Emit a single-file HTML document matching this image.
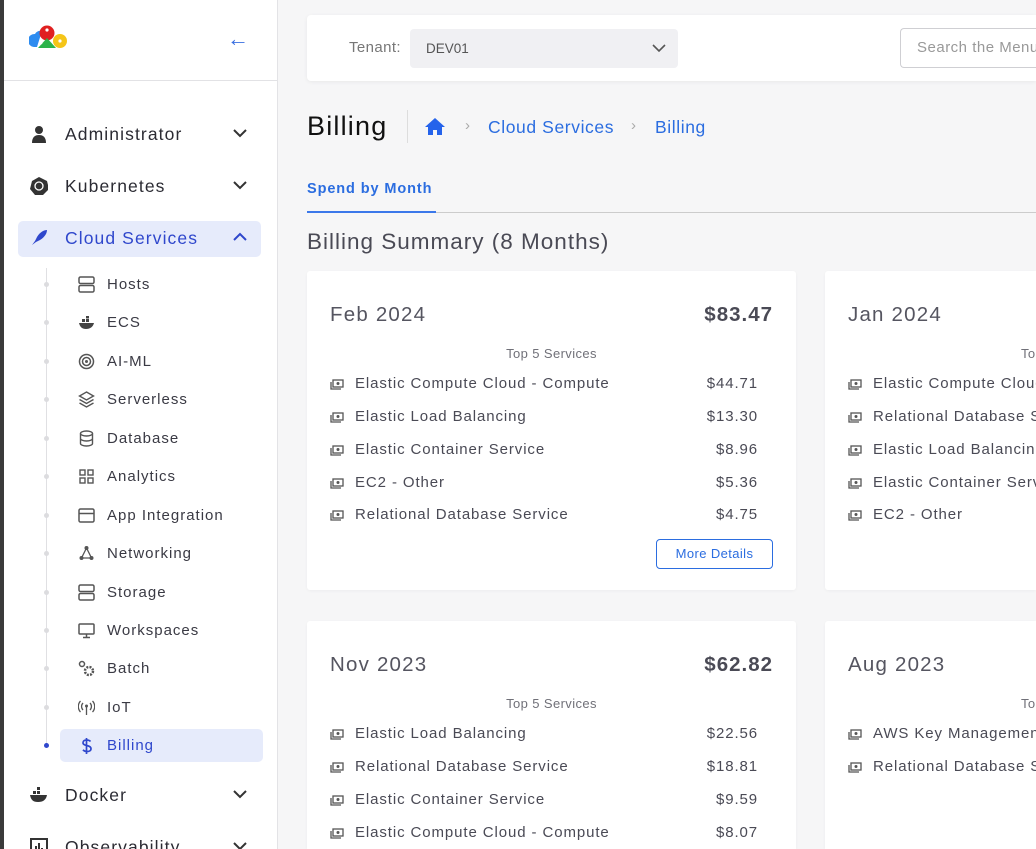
<!DOCTYPE html>
<html><head><meta charset="utf-8"><style>
*{box-sizing:border-box;margin:0;padding:0}
html{width:1036px;height:849px;overflow:hidden}
body{width:1036px;height:849px;overflow:hidden;background:#f6f6f7;font-family:"Liberation Sans",sans-serif;position:relative;color:#3d3d4a}
.abs{position:absolute}
#edge{left:0;top:0;width:4px;height:849px;background:#3a3a3a}
#side{left:4px;top:0;width:274px;height:849px;background:#fff;border-right:1px solid #e3e3e6}
#sidehead{left:4px;top:0;width:273px;height:81px;border-bottom:1px solid #e2e2e5}
.top{position:absolute;left:0;width:273px;height:36px;font-size:17.5px;color:#2b2b33;letter-spacing:1.1px}
.top .ic{position:absolute;left:26px;top:9px;width:18px;height:18px}
.top .t{position:absolute;left:61px;top:8px}
.top .ch{position:absolute;left:229px;top:12px}
.sub{position:absolute;left:56px;width:203px;height:32px;font-size:15px;color:#3a3a44;letter-spacing:1px}
.sub .t{position:absolute;left:51px;top:8px}
.sub svg{position:absolute;left:22px;top:8px}
.dot{position:absolute;left:44px;width:5px;height:5px;border-radius:50%;background:#dcdcdf}
.card{position:absolute;background:#fff;border-radius:3px;box-shadow:0 1px 3px rgba(0,0,0,.04);overflow:hidden}
.mon{position:absolute;left:23px;top:32px;font-size:20.5px;color:#555560;letter-spacing:1.2px}
.tot{position:absolute;right:23px;top:32px;font-size:20.5px;font-weight:bold;color:#4a4a55;letter-spacing:1px}
.t5{position:absolute;left:0;width:100%;text-align:center;top:75px;font-size:13px;color:#707078;letter-spacing:.4px}
.row{position:absolute;left:23px;width:428px;font-size:15px;color:#4a4a55;letter-spacing:.9px;white-space:nowrap}
.row .n{position:absolute;left:25px;top:1px}
.row .a{position:absolute;right:0;top:1px}
.row svg{position:absolute;left:0;top:5px}
</style></head><body>
<div class="abs" id="edge"></div>
<div class="abs" id="side"></div>
<div class="abs" id="sidehead"></div>
<svg class="abs" style="left:29px;top:25px" width="39" height="25" viewBox="0 0 39 25">
<path d="M6 9a6 6 0 0 1 7-3L8 22H5a6.5 6.5 0 0 1 1-13z" fill="#2d8cf0"/>
<circle cx="18" cy="8" r="7.5" fill="#e02020"/>
<path d="M9 23l9-10 9 10z" fill="#2bb34a"/>
<circle cx="31" cy="16" r="7" fill="#f5c518"/>
<circle cx="18" cy="5" r="1.6" fill="#fff"/><circle cx="31" cy="16" r="1.6" fill="#fff"/><circle cx="12" cy="18" r="1.4" fill="#fff"/>
</svg>
<div class="abs" style="left:227px;top:26px;font-size:22px;color:#3a6fe0">←</div>

<div class="top" style="left:4px;top:116px"><svg class="ic" viewBox="0 0 18 18"><circle cx="9" cy="5" r="4" fill="#333"/><path d="M2 18c0-6 3-8 7-8s7 2 7 8z" fill="#333"/></svg><span class="t">Administrator</span><svg class="ch" width="14" height="10"><path d="M1 2l6 6 6-6" stroke="#333" stroke-width="2" fill="none"/></svg></div>
<div class="top" style="left:4px;top:168px"><svg class="ic" viewBox="0 0 18 18"><path d="M9 0l8 4 2 8-6 6H5l-5-6 2-8z" fill="#333"/><circle cx="9" cy="9" r="4" stroke="#fff" stroke-width="1.3" fill="none"/></svg><span class="t">Kubernetes</span><svg class="ch" width="14" height="10"><path d="M1 2l6 6 6-6" stroke="#333" stroke-width="2" fill="none"/></svg></div>
<div class="abs" style="left:18px;top:221px;width:243px;height:36px;background:#e6ebfb;border-radius:5px"></div>
<div class="top" style="left:4px;top:220px;color:#2f47cc"><svg class="ic" viewBox="0 0 18 18"><path d="M4 14l3-6c3-5 7-7 10-7 0 3-2 7-7 10z M2 16l3-4 1 1z" fill="#2f47cc"/></svg><span class="t">Cloud Services</span><svg class="ch" width="14" height="10"><path d="M1 8l6-6 6 6" stroke="#2f47cc" stroke-width="2" fill="none"/></svg></div>

<div class="abs" style="left:46px;top:268px;width:1px;height:478px;background:#e0e0e3"></div>
<div class="dot" style="top:282px"></div><div class="dot" style="top:320px"></div><div class="dot" style="top:359px"></div><div class="dot" style="top:397px"></div><div class="dot" style="top:436px"></div><div class="dot" style="top:474px"></div><div class="dot" style="top:513px"></div><div class="dot" style="top:551px"></div><div class="dot" style="top:590px"></div><div class="dot" style="top:628px"></div><div class="dot" style="top:666px"></div><div class="dot" style="top:705px"></div>
<div class="dot" style="top:743px;background:#2f47cc"></div>

<div class="sub" style="top:268px"><svg width="17" height="17"><rect x="1" y="1" width="15" height="6.5" rx="1.5" stroke="#555" stroke-width="1.5" fill="none"/><rect x="1" y="9.5" width="15" height="6.5" rx="1.5" stroke="#555" stroke-width="1.5" fill="none"/></svg><span class="t">Hosts</span></div>
<div class="sub" style="top:306px"><svg width="17" height="17"><path d="M1 9h15c-1 4-4 6-8 6S2 13 1 9z" fill="#444"/><rect x="4" y="5" width="3" height="3" fill="#444"/><rect x="8" y="5" width="3" height="3" fill="#444"/><rect x="8" y="2" width="3" height="2.5" fill="#444"/></svg><span class="t">ECS</span></div>
<div class="sub" style="top:345px"><svg width="17" height="17"><circle cx="8.5" cy="8.5" r="7" stroke="#555" stroke-width="1.5" fill="none"/><circle cx="8.5" cy="8.5" r="4" stroke="#555" stroke-width="1.5" fill="none"/><circle cx="8.5" cy="8.5" r="1.5" fill="#555"/></svg><span class="t">AI-ML</span></div>
<div class="sub" style="top:383px"><svg width="17" height="17"><path d="M8.5 1l7 4-7 4-7-4z M1.5 8.5l7 4 7-4 M1.5 12l7 4 7-4" stroke="#555" stroke-width="1.4" fill="none"/></svg><span class="t">Serverless</span></div>
<div class="sub" style="top:422px"><svg width="17" height="17"><ellipse cx="8.5" cy="3.5" rx="6" ry="2.5" stroke="#555" stroke-width="1.4" fill="none"/><path d="M2.5 3.5v10c0 1.4 2.7 2.5 6 2.5s6-1.1 6-2.5v-10 M2.5 8.5c0 1.4 2.7 2.5 6 2.5s6-1.1 6-2.5" stroke="#555" stroke-width="1.4" fill="none"/></svg><span class="t">Database</span></div>
<div class="sub" style="top:460px"><svg width="17" height="17"><rect x="2" y="2" width="5" height="5" stroke="#555" stroke-width="1.4" fill="none"/><rect x="10" y="2" width="5" height="5" stroke="#555" stroke-width="1.4" fill="none"/><rect x="2" y="10" width="5" height="5" stroke="#555" stroke-width="1.4" fill="none"/><rect x="10" y="10" width="5" height="5" stroke="#555" stroke-width="1.4" fill="none"/></svg><span class="t">Analytics</span></div>
<div class="sub" style="top:499px"><svg width="17" height="17"><rect x="1" y="2" width="15" height="13" rx="1.5" stroke="#555" stroke-width="1.5" fill="none"/><path d="M1 6.5h15" stroke="#555" stroke-width="1.5"/></svg><span class="t">App Integration</span></div>
<div class="sub" style="top:537px"><svg width="17" height="17"><path d="M8.5 3l-5 10h10z" stroke="#555" stroke-width="1.3" fill="none"/><circle cx="8.5" cy="3" r="2" fill="#555"/><circle cx="3.5" cy="13" r="2" fill="#555"/><circle cx="13.5" cy="13" r="2" fill="#555"/></svg><span class="t">Networking</span></div>
<div class="sub" style="top:576px"><svg width="17" height="17"><rect x="1" y="1" width="15" height="6.5" rx="1.5" stroke="#555" stroke-width="1.5" fill="none"/><rect x="1" y="9.5" width="15" height="6.5" rx="1.5" stroke="#555" stroke-width="1.5" fill="none"/></svg><span class="t">Storage</span></div>
<div class="sub" style="top:614px"><svg width="17" height="17"><rect x="1" y="2" width="15" height="10" rx="1" stroke="#555" stroke-width="1.5" fill="none"/><path d="M5 15.5h7 M8.5 12v3" stroke="#555" stroke-width="1.5"/></svg><span class="t">Workspaces</span></div>
<div class="sub" style="top:652px"><svg width="17" height="17"><circle cx="4" cy="4" r="2.5" stroke="#555" stroke-width="1.5" fill="none"/><circle cx="11" cy="11" r="4" stroke="#555" stroke-width="2.5" fill="none" stroke-dasharray="2 1.2"/></svg><span class="t">Batch</span></div>
<div class="sub" style="top:691px"><svg width="17" height="17"><path d="M8.5 7v9 M5 4a5 5 0 0 0 0 7 M12 4a5 5 0 0 1 0 7 M2.5 2a8 8 0 0 0 0 11 M14.5 2a8 8 0 0 1 0 11" stroke="#555" stroke-width="1.3" fill="none"/><circle cx="8.5" cy="7" r="1.5" fill="#555"/></svg><span class="t">IoT</span></div>
<div class="abs" style="left:60px;top:729px;width:203px;height:33px;background:#e6ebfb;border-radius:5px"></div>
<div class="sub" style="top:729px;color:#2f47cc"><svg width="17" height="18"><path d="M12.5 4.5c-1-1.2-2.5-1.5-4-1.5-2 0-3.5 1-3.5 2.7 0 3.8 8 2 8 6 0 1.8-1.7 2.8-4 2.8-1.6 0-3-.5-4-1.7 M8.5 1v16" stroke="#2f47cc" stroke-width="1.7" fill="none"/></svg><span class="t">Billing</span></div>

<div class="top" style="left:4px;top:777px"><svg class="ic" viewBox="0 0 18 18"><path d="M0 9h17c-1 5-4 7-9 7S1 14 0 9z" fill="#333"/><rect x="3" y="5" width="3" height="3" fill="#333"/><rect x="7" y="5" width="3" height="3" fill="#333"/><rect x="7" y="1" width="3" height="3" fill="#333"/></svg><span class="t">Docker</span><svg class="ch" width="14" height="10"><path d="M1 2l6 6 6-6" stroke="#333" stroke-width="2" fill="none"/></svg></div>
<div class="top" style="left:4px;top:829px"><svg class="ic" viewBox="0 0 18 18"><rect x="1" y="1" width="16" height="16" stroke="#333" stroke-width="2" fill="none"/><path d="M6 13V8 M9 13V5 M12 13v-3" stroke="#333" stroke-width="2"/></svg><span class="t">Observability</span><svg class="ch" width="14" height="10"><path d="M1 2l6 6 6-6" stroke="#333" stroke-width="2" fill="none"/></svg></div>

<div class="abs" style="left:307px;top:15px;width:729px;height:66px;background:#fff;border-radius:4px 0 0 4px;box-shadow:0 1px 4px rgba(0,0,0,.06)"></div>
<div class="abs" style="left:349px;top:39px;font-size:15px;color:#777;letter-spacing:.4px">Tenant:</div>
<div class="abs" style="left:410px;top:29px;width:268px;height:39px;background:#f0f0f3;border-radius:4px"></div>
<div class="abs" style="left:426px;top:41px;font-size:13.5px;color:#555">DEV01</div>
<svg class="abs" style="left:652px;top:43px" width="14" height="10"><path d="M1 2l6 6 6-6" stroke="#555" stroke-width="1.6" fill="none"/></svg>
<div class="abs" style="left:900px;top:28px;width:136px;height:40px;border:1px solid #cfcfd3;border-right:none;border-radius:4px 0 0 4px;background:#fff;overflow:hidden"><div style="position:absolute;left:16px;top:10px;font-size:15px;color:#999;white-space:nowrap;letter-spacing:.5px">Search the Menu</div></div>

<div class="abs" style="left:307px;top:111px;font-size:27px;color:#111;letter-spacing:1.2px">Billing</div>
<div class="abs" style="left:407px;top:110px;width:1px;height:33px;background:#ddd"></div>
<svg class="abs" style="left:425px;top:117px" width="20" height="19"><path d="M10 1L0 10h3v8h5v-5h4v5h5v-8h3z" fill="#2563eb"/></svg>
<div class="abs" style="left:465px;top:117px;font-size:15px;color:#aaa">›</div>
<div class="abs" style="left:488px;top:117px;font-size:17.5px;color:#2b6de0;letter-spacing:.6px">Cloud Services</div>
<div class="abs" style="left:631px;top:117px;font-size:15px;color:#aaa">›</div>
<div class="abs" style="left:655px;top:117px;font-size:17.5px;color:#2b6de0;letter-spacing:.6px">Billing</div>

<div class="abs" style="left:307px;top:181px;font-size:14.5px;font-weight:bold;color:#2b6de0;letter-spacing:.9px">Spend by Month</div>
<div class="abs" style="left:307px;top:212px;width:729px;height:1px;background:#ccc"></div>
<div class="abs" style="left:307px;top:211px;width:129px;height:2px;background:#3b78ea"></div>
<div class="abs" style="left:307px;top:229px;font-size:22.5px;color:#4a4a55;letter-spacing:1px">Billing Summary (8 Months)</div>

<div class="card" style="left:307px;top:271px;width:489px;height:319px">
<div class="mon">Feb 2024</div><div class="tot">$83.47</div><div class="t5">Top 5 Services</div>
<div class="row" style="top:103px"><svg width="14" height="11"><rect x="3" y="1" width="10" height="7" stroke="#555" stroke-width="1.3" fill="none"/><path d="M1 3v7h10" stroke="#555" stroke-width="1.3" fill="none"/><circle cx="8" cy="4.5" r="1.5" fill="#555"/></svg><span class="n">Elastic Compute Cloud - Compute</span><span class="a">$44.71</span></div>
<div class="row" style="top:136px"><svg width="14" height="11"><rect x="3" y="1" width="10" height="7" stroke="#555" stroke-width="1.3" fill="none"/><path d="M1 3v7h10" stroke="#555" stroke-width="1.3" fill="none"/><circle cx="8" cy="4.5" r="1.5" fill="#555"/></svg><span class="n">Elastic Load Balancing</span><span class="a">$13.30</span></div>
<div class="row" style="top:169px"><svg width="14" height="11"><rect x="3" y="1" width="10" height="7" stroke="#555" stroke-width="1.3" fill="none"/><path d="M1 3v7h10" stroke="#555" stroke-width="1.3" fill="none"/><circle cx="8" cy="4.5" r="1.5" fill="#555"/></svg><span class="n">Elastic Container Service</span><span class="a">$8.96</span></div>
<div class="row" style="top:202px"><svg width="14" height="11"><rect x="3" y="1" width="10" height="7" stroke="#555" stroke-width="1.3" fill="none"/><path d="M1 3v7h10" stroke="#555" stroke-width="1.3" fill="none"/><circle cx="8" cy="4.5" r="1.5" fill="#555"/></svg><span class="n">EC2 - Other</span><span class="a">$5.36</span></div>
<div class="row" style="top:234px"><svg width="14" height="11"><rect x="3" y="1" width="10" height="7" stroke="#555" stroke-width="1.3" fill="none"/><path d="M1 3v7h10" stroke="#555" stroke-width="1.3" fill="none"/><circle cx="8" cy="4.5" r="1.5" fill="#555"/></svg><span class="n">Relational Database Service</span><span class="a">$4.75</span></div>
<div class="abs" style="left:349px;top:268px;width:117px;height:30px;border:1px solid #2b6de0;border-radius:4px;color:#2b6de0;font-size:13px;text-align:center;line-height:28px;letter-spacing:.4px">More Details</div>
</div>

<div class="card" style="left:825px;top:271px;width:211px;height:319px;border-radius:3px 0 0 3px">
<div class="mon">Jan 2024</div><div class="t5" style="left:196px;text-align:left">Top 5 Services</div>
<div class="row" style="top:103px"><svg width="14" height="11"><rect x="3" y="1" width="10" height="7" stroke="#555" stroke-width="1.3" fill="none"/><path d="M1 3v7h10" stroke="#555" stroke-width="1.3" fill="none"/><circle cx="8" cy="4.5" r="1.5" fill="#555"/></svg><span class="n">Elastic Compute Cloud - Compute</span></div>
<div class="row" style="top:136px"><svg width="14" height="11"><rect x="3" y="1" width="10" height="7" stroke="#555" stroke-width="1.3" fill="none"/><path d="M1 3v7h10" stroke="#555" stroke-width="1.3" fill="none"/><circle cx="8" cy="4.5" r="1.5" fill="#555"/></svg><span class="n">Relational Database Service</span></div>
<div class="row" style="top:169px"><svg width="14" height="11"><rect x="3" y="1" width="10" height="7" stroke="#555" stroke-width="1.3" fill="none"/><path d="M1 3v7h10" stroke="#555" stroke-width="1.3" fill="none"/><circle cx="8" cy="4.5" r="1.5" fill="#555"/></svg><span class="n">Elastic Load Balancing</span></div>
<div class="row" style="top:202px"><svg width="14" height="11"><rect x="3" y="1" width="10" height="7" stroke="#555" stroke-width="1.3" fill="none"/><path d="M1 3v7h10" stroke="#555" stroke-width="1.3" fill="none"/><circle cx="8" cy="4.5" r="1.5" fill="#555"/></svg><span class="n">Elastic Container Service</span></div>
<div class="row" style="top:234px"><svg width="14" height="11"><rect x="3" y="1" width="10" height="7" stroke="#555" stroke-width="1.3" fill="none"/><path d="M1 3v7h10" stroke="#555" stroke-width="1.3" fill="none"/><circle cx="8" cy="4.5" r="1.5" fill="#555"/></svg><span class="n">EC2 - Other</span></div>
</div>

<div class="card" style="left:307px;top:621px;width:489px;height:228px;border-radius:3px 3px 0 0">
<div class="mon">Nov 2023</div><div class="tot">$62.82</div><div class="t5">Top 5 Services</div>
<div class="row" style="top:103px"><svg width="14" height="11"><rect x="3" y="1" width="10" height="7" stroke="#555" stroke-width="1.3" fill="none"/><path d="M1 3v7h10" stroke="#555" stroke-width="1.3" fill="none"/><circle cx="8" cy="4.5" r="1.5" fill="#555"/></svg><span class="n">Elastic Load Balancing</span><span class="a">$22.56</span></div>
<div class="row" style="top:136px"><svg width="14" height="11"><rect x="3" y="1" width="10" height="7" stroke="#555" stroke-width="1.3" fill="none"/><path d="M1 3v7h10" stroke="#555" stroke-width="1.3" fill="none"/><circle cx="8" cy="4.5" r="1.5" fill="#555"/></svg><span class="n">Relational Database Service</span><span class="a">$18.81</span></div>
<div class="row" style="top:169px"><svg width="14" height="11"><rect x="3" y="1" width="10" height="7" stroke="#555" stroke-width="1.3" fill="none"/><path d="M1 3v7h10" stroke="#555" stroke-width="1.3" fill="none"/><circle cx="8" cy="4.5" r="1.5" fill="#555"/></svg><span class="n">Elastic Container Service</span><span class="a">$9.59</span></div>
<div class="row" style="top:202px"><svg width="14" height="11"><rect x="3" y="1" width="10" height="7" stroke="#555" stroke-width="1.3" fill="none"/><path d="M1 3v7h10" stroke="#555" stroke-width="1.3" fill="none"/><circle cx="8" cy="4.5" r="1.5" fill="#555"/></svg><span class="n">Elastic Compute Cloud - Compute</span><span class="a">$8.07</span></div>
</div>

<div class="card" style="left:825px;top:621px;width:211px;height:228px;border-radius:3px 0 0 0">
<div class="mon">Aug 2023</div><div class="t5" style="left:196px;text-align:left">Top 5 Services</div>
<div class="row" style="top:103px"><svg width="14" height="11"><rect x="3" y="1" width="10" height="7" stroke="#555" stroke-width="1.3" fill="none"/><path d="M1 3v7h10" stroke="#555" stroke-width="1.3" fill="none"/><circle cx="8" cy="4.5" r="1.5" fill="#555"/></svg><span class="n">AWS Key Management Service</span></div>
<div class="row" style="top:136px"><svg width="14" height="11"><rect x="3" y="1" width="10" height="7" stroke="#555" stroke-width="1.3" fill="none"/><path d="M1 3v7h10" stroke="#555" stroke-width="1.3" fill="none"/><circle cx="8" cy="4.5" r="1.5" fill="#555"/></svg><span class="n">Relational Database Service</span></div>
</div>
</body></html>
